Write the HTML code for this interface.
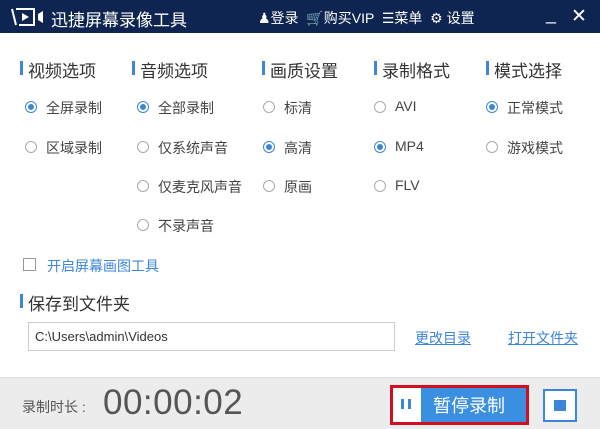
<!DOCTYPE html>
<html><head><meta charset="utf-8"><style>
*{margin:0;padding:0;box-sizing:border-box}
body{width:600px;height:429px;overflow:hidden;background:#fff;font-family:"Liberation Sans","Noto Sans CJK SC",sans-serif;position:relative;color:#333}
.a{position:absolute;white-space:nowrap}
.top{position:absolute;left:0;top:0;width:600px;height:33px;background:#0d2550}
.h{font-size:17px;color:#333}
.h:before{content:"";position:absolute;left:0;top:4px;width:3px;height:14px;background:#3b86d8}
.h span{margin-left:8px}
.r{font-size:14px;color:#444}
.r i{position:absolute;left:0;top:3px;width:12px;height:12px;border:1px solid #aaa;border-radius:50%}
.r.on i{border-color:#3b86d8}
.r.on i:after{content:"";position:absolute;left:2px;top:2px;width:6px;height:6px;border-radius:50%;background:#3b86d8}
.r span{margin-left:21px}
</style></head><body>
<div class="top"></div>
<svg class="a" style="left:10px;top:7px" width="40" height="20"><path d="M2 2 L6 18 M6 2 H24 V18 H9" stroke="#fff" stroke-width="2" fill="none"/><path d="M12 6 L19 10 L12 14Z" fill="#fff"/><path d="M28 7 L33 4 V16 L28 13Z" fill="#fff"/></svg>
<div class="a" style="left:51px;top:6px;font-size:17px;color:#fff">迅捷屏幕录像工具</div>
<div class="a" style="left:258px;top:8px;font-size:14px;color:#fff">&#9823;登录 &nbsp;&#128722;购买VIP &nbsp;&#9776;菜单 &nbsp;&#9881; 设置</div>
<div class="a" style="left:546px;top:4px;font-size:18px;color:#fff">_</div>
<div class="a" style="left:571px;top:5px;font-size:19px;color:#fff">✕</div>

<div class="a h" style="left:20px;top:57px"><span>视频选项</span></div>
<div class="a h" style="left:132px;top:57px"><span>音频选项</span></div>
<div class="a h" style="left:262px;top:57px"><span>画质设置</span></div>
<div class="a h" style="left:374px;top:57px"><span>录制格式</span></div>
<div class="a h" style="left:486px;top:57px"><span>模式选择</span></div>

<div class="a r on" style="left:25px;top:98px"><i></i><span>全屏录制</span></div>
<div class="a r" style="left:25px;top:138px"><i></i><span>区域录制</span></div>
<div class="a r on" style="left:137px;top:98px"><i></i><span>全部录制</span></div>
<div class="a r" style="left:137px;top:138px"><i></i><span>仅系统声音</span></div>
<div class="a r" style="left:137px;top:177px"><i></i><span>仅麦克风声音</span></div>
<div class="a r" style="left:137px;top:216px"><i></i><span>不录声音</span></div>
<div class="a r" style="left:263px;top:98px"><i></i><span>标清</span></div>
<div class="a r on" style="left:263px;top:138px"><i></i><span>高清</span></div>
<div class="a r" style="left:263px;top:177px"><i></i><span>原画</span></div>
<div class="a r" style="left:374px;top:98px"><i></i><span>AVI</span></div>
<div class="a r on" style="left:374px;top:138px"><i></i><span>MP4</span></div>
<div class="a r" style="left:374px;top:177px"><i></i><span>FLV</span></div>
<div class="a r on" style="left:486px;top:98px"><i></i><span>正常模式</span></div>
<div class="a r" style="left:486px;top:138px"><i></i><span>游戏模式</span></div>

<div class="a" style="left:23px;top:258px;width:13px;height:13px;border:1px solid #999"></div>
<div class="a" style="left:47px;top:256px;font-size:14px;color:#3b86d8">开启屏幕画图工具</div>
<div class="a h" style="left:20px;top:290px"><span>保存到文件夹</span></div>
<div class="a" style="left:28px;top:322px;width:367px;height:29px;border:1px solid #ccc;font-size:13px;padding:6px 6px;color:#333">C:\Users\admin\Videos</div>
<div class="a" style="left:415px;top:328px;font-size:14px;color:#3b86d8;text-decoration:underline">更改目录</div>
<div class="a" style="left:508px;top:328px;font-size:14px;color:#3b86d8;text-decoration:underline">打开文件夹</div>

<div class="a" style="left:0;top:377px;width:600px;height:52px;background:#ececec;border-top:1px solid #ddd"></div>
<div class="a" style="left:22px;top:397px;font-size:14px;color:#555">录制时长 :</div>
<div class="a" style="left:103px;top:383px;font-size:35px;color:#555;letter-spacing:0.5px">00:00:02</div>
<div class="a" style="left:390px;top:385px;width:139px;height:40px;border:3px solid #d01020;background:#fff"></div>
<div class="a" style="left:401px;top:399px;width:3px;height:10px;background:#3b86d8"></div>
<div class="a" style="left:408px;top:399px;width:3px;height:10px;background:#3b86d8"></div>
<div class="a" style="left:421px;top:388px;width:105px;height:34px;background:#3b8fe0;color:#fff;font-size:18px;padding:4px 0 0 12px">暂停录制</div>
<div class="a" style="left:543px;top:389px;width:34px;height:33px;border:2px solid #3b86d8;background:#fff"></div>
<div class="a" style="left:554px;top:400px;width:12px;height:11px;background:#3b86d8"></div>
</body></html>
